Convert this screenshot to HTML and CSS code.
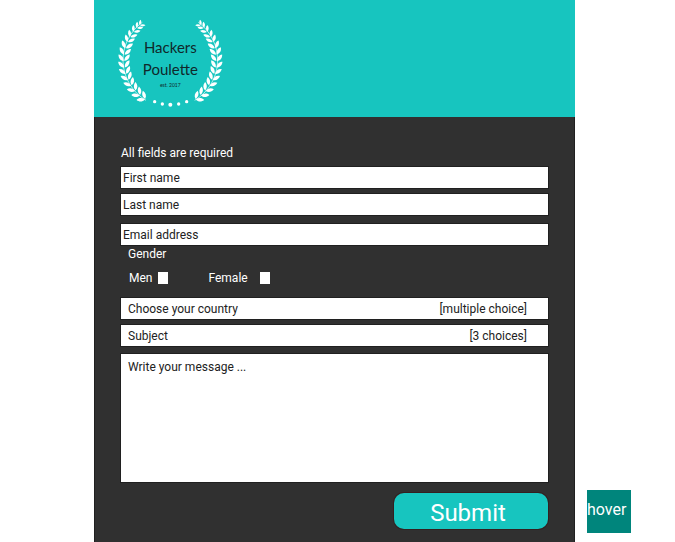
FILE: index.html
```html
<!DOCTYPE html>
<html lang="en">
<head>
<meta charset="utf-8">
<title>Hackers Poulette</title>
<link rel="stylesheet" href="styles.css">
</head>
<body>
<div class="page">
  <main class="card">
    <header class="banner">
      <svg class="logo" viewBox="0 0 360 315" role="img" aria-label="Hackers Poulette">
        <defs>
          <g id="pair">
            <path d="M41 158C30 157 25 149 25 139C35 140 41 148 41 158Z"/>
            <path d="M43 158C43 148 48 140 59 138C59 149 54 156 43 158Z"/>
          </g>
          <g id="branch">
            <path class="stem" d="M108 271A140 140 0 0 1 97 37"/>
            <use href="#pair" transform="rotate(-54 181 151)"/>
            <use href="#pair" transform="rotate(-46 181 151)"/>
            <use href="#pair" transform="rotate(-38 181 151)"/>
            <use href="#pair" transform="rotate(-30 181 151)"/>
            <use href="#pair" transform="rotate(-22 181 151)"/>
            <use href="#pair" transform="rotate(-14 181 151)"/>
            <use href="#pair" transform="rotate(-6 181 151)"/>
            <use href="#pair" transform="rotate(2 181 151)"/>
            <use href="#pair" transform="rotate(10 181 151)"/>
            <use href="#pair" transform="rotate(18 181 151)"/>
            <use href="#pair" transform="rotate(26 181 151) translate(4 15) scale(.9)"/>
            <use href="#pair" transform="rotate(33 181 151) translate(6 23) scale(.85)"/>
            <use href="#pair" transform="rotate(40 181 151) translate(8 30) scale(.8)"/>
            <use href="#pair" transform="rotate(46 181 151) translate(11 42) scale(.72)"/>
            <use href="#pair" transform="rotate(51 181 151) translate(14 53) scale(.65)"/>
          </g>
        </defs>
        <g class="laurel">
          <use href="#branch"/>
          <use href="#branch" transform="translate(362 0) scale(-1 1)"/>
          <circle cx="134" cy="275" r="5"/>
          <circle cx="157" cy="282" r="5"/>
          <circle cx="181" cy="284" r="6"/>
          <circle cx="206" cy="282" r="5"/>
          <circle cx="230" cy="275" r="5"/>
        </g>
        <text class="brand" x="181" y="128">Hackers</text>
        <text class="brand" x="181" y="194">Poulette</text>
        <text class="since" x="181" y="232">est. 2017</text>
      </svg>
    </header>
    <form class="form">
      <p class="intro">All fields are required</p>
      <div class="names">
        <input class="field" type="text" placeholder="First name" aria-label="First name">
        <input class="field" type="text" placeholder="Last name" aria-label="Last name">
      </div>
      <input class="field" type="email" placeholder="Email address" aria-label="Email address">
      <fieldset class="gender">
        <legend>Gender</legend>
        <div class="options">
          <label class="option">Men <input type="checkbox" name="men"></label>
          <label class="option option-wide">Female <input type="checkbox" name="female"></label>
        </div>
      </fieldset>
      <div class="selects">
        <div class="choice">
          <select class="field indented" aria-label="Choose your country"><option>Choose your country</option></select>
          <span class="hint">[multiple choice]</span>
        </div>
        <div class="choice">
          <select class="field indented" aria-label="Subject"><option>Subject</option></select>
          <span class="hint">[3 choices]</span>
        </div>
      </div>
      <textarea class="message" placeholder="Write your message ..." aria-label="Write your message"></textarea>
      <button class="submit" type="submit">Submit</button>
    </form>
  </main>
  <aside class="side">
    <button class="hover" type="button">hover</button>
  </aside>
</div>
</body>
</html>
```
FILE: styles.css
```css
* {
  box-sizing: border-box;
}

body {
  margin: 0;
  background: #fff;
  font: 12px/16px Roboto, sans-serif;
}

input,
select,
textarea,
button {
  margin: 0;
  border: 0;
  border-radius: 0;
  font: inherit;
  color: #222;
}

.page {
  display: grid;
  grid-template-columns: 94px minmax(0, 1fr) 100px;
  min-height: 100vh;
}

.card {
  grid-column: 2;
  background: #303030;
  box-shadow: inset 1px 0 #202020, inset -1px 0 #202020;
}

.banner {
  height: 117px;
  padding: 10px 16px 0;
  background: #17c5bf;
}

.logo {
  display: block;
  width: 120px;
  height: 105px;
}

.laurel {
  fill: #fff;
}

.stem {
  fill: none;
  stroke: #fff;
  stroke-width: 2;
}

.brand {
  font: 45px Lato, sans-serif;
  text-anchor: middle;
  fill: #10292b;
}

.since {
  font: 15px Lato, sans-serif;
  text-anchor: middle;
  fill: #10292b;
}

.form {
  display: flex;
  flex-direction: column;
  padding: 28px 27px 13px;
}

.intro {
  margin: 0 0 6px;
  color: #fff;
}

.names,
.selects {
  display: grid;
  gap: 6px;
}

.names {
  margin-bottom: 9px;
}

.field {
  display: block;
  appearance: none;
  width: 100%;
  height: 21px;
  padding: 0 2px;
  background: #fff;
  box-shadow: 0 0 0 1px #202020;
}

::placeholder {
  color: #222;
  opacity: 1;
}

.indented {
  padding: 0 7px;
}

.gender {
  margin: 0 0 12px;
  padding: 0 7px;
  border: 0;
  color: #fff;
}

.gender legend {
  padding: 1px 0 8px;
}

.options {
  display: flex;
  gap: 40px;
  padding-left: 1px;
}

.option {
  display: flex;
  align-items: center;
  gap: 6px;
}

.option-wide {
  gap: 12px;
}

.option input {
  appearance: none;
  width: 10px;
  height: 12px;
  background: #fff;
}

.option input:checked {
  background: #17c5bf;
}

.choice {
  position: relative;
}

.hint {
  position: absolute;
  top: 3px;
  right: 21px;
  color: #222;
  pointer-events: none;
}

.message {
  display: block;
  height: 128px;
  margin: 8px 0 11px;
  padding: 5px 7px;
  background: #fff;
  box-shadow: 0 0 0 1px #202020;
  resize: none;
}

.submit {
  align-self: flex-end;
  width: 154px;
  height: 36px;
  padding: 4px 6px 0 0;
  border-radius: 10px;
  background: #17c5bf;
  box-shadow: 0 0 0 1px #332020;
  color: #fff;
  font-size: 24px;
}

.side {
  display: flex;
  align-items: flex-end;
  padding: 0 0 9px 12px;
}

.hover {
  width: 44px;
  height: 43px;
  padding: 0 0 4px;
  background: #00857c;
  color: #fff;
  font-size: 16px;
  text-align: left;
}

.submit:hover {
  background: #00857c;
}
```
